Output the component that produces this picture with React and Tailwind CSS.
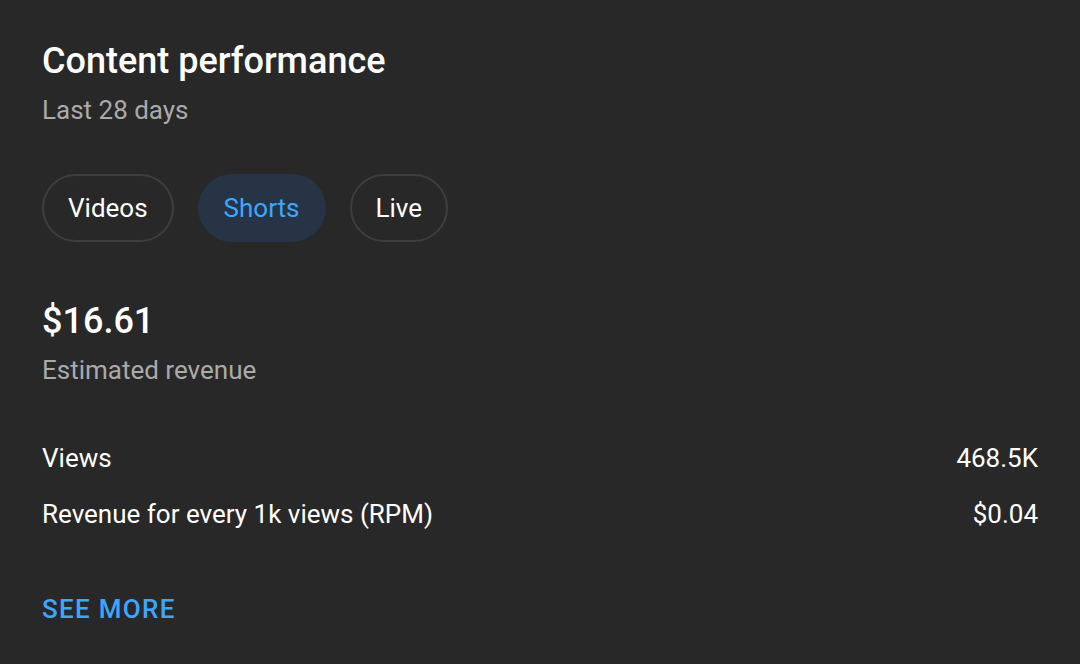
import React, { useState } from "react";

const tabs = ["Videos", "Shorts", "Live"];

const rows = [
  { label: "Views", value: "468.5K" },
  { label: "Revenue for every 1k views (RPM)", value: "$0.04" },
];

const App = () => {
  const [active, setActive] = useState("Shorts");

  return (
    <div
      className="w-[1080px] h-[664px] bg-[#282828] text-white px-[42px] pt-[39px] overflow-hidden"
      style={{ fontFamily: "Roboto, 'Noto Sans', sans-serif" }}
    >
      <h1 className="text-[36px] leading-[44px] font-medium">Content performance</h1>
      <p className="mt-[11px] text-[26px] leading-8 text-[#aaaaaa]">Last 28 days</p>

      {/* Tabs */}
      <div className="mt-12 flex gap-6">
        {tabs.map((t) => (
          <button
            key={t}
            onClick={() => setActive(t)}
            className={
              t === active
                ? "h-[68px] px-6 rounded-full text-[26px] bg-[#263445] text-[#3ea6ff] border-2 border-transparent"
                : "h-[68px] px-6 rounded-full text-[26px] text-white border-2 border-[#3e3e3e]"
            }
          >
            {t}
          </button>
        ))}
      </div>

      <div className="mt-[57px] text-[36px] leading-[44px] font-medium">$16.61</div>
      <div className="mt-[11px] text-[26px] leading-8 text-[#aaaaaa]">Estimated revenue</div>

      <div className="mt-[56px] flex flex-col gap-6">
        {rows.map((r) => (
          <div key={r.label} className="flex justify-between text-[26px] leading-8">
            <span>{r.label}</span>
            <span>{r.value}</span>
          </div>
        ))}
      </div>

      <button className="mt-[63px] block text-[26px] leading-8 font-medium tracking-wider text-[#3ea6ff]">
        SEE MORE
      </button>
    </div>
  );
};

export default App;
